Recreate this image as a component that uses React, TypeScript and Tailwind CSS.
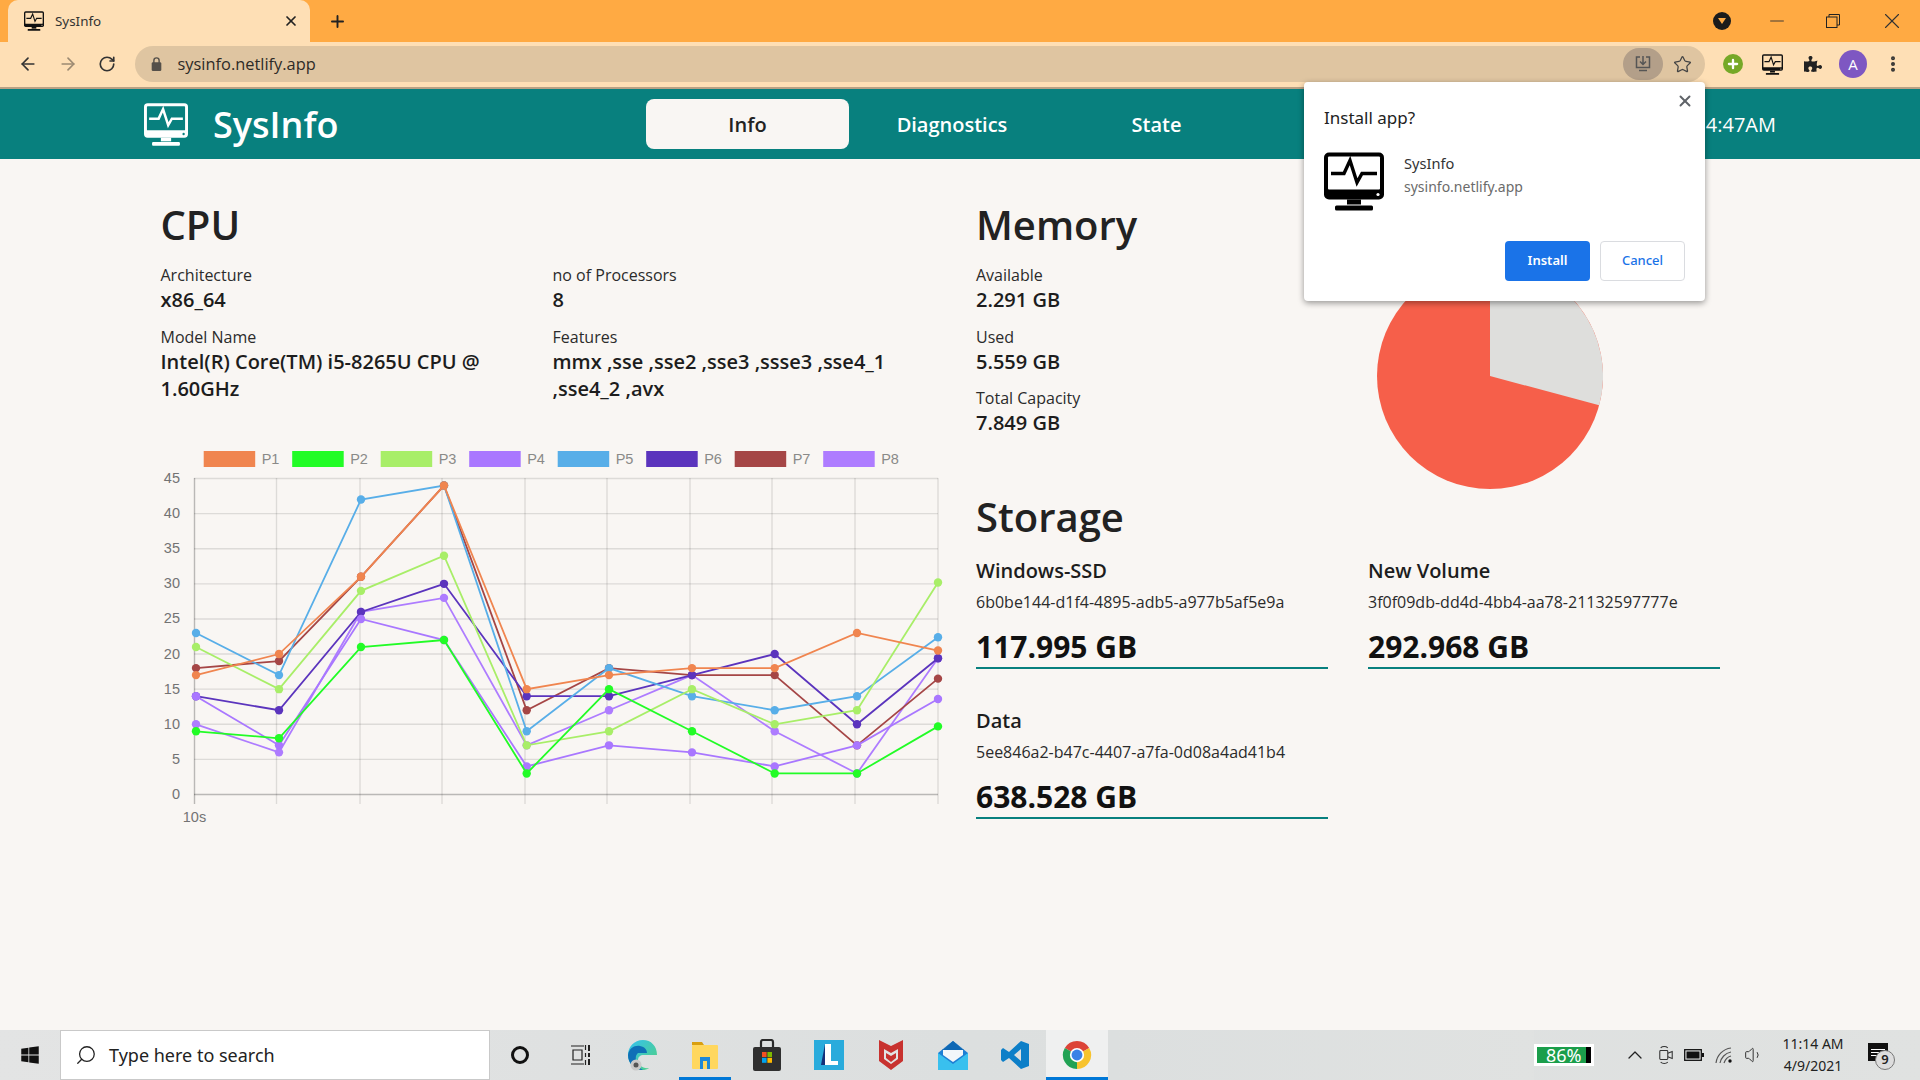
import React from "react";
import { ArrowLeft, ArrowRight, RotateCw, Star, X, Plus, Minus, EllipsisVertical, ChevronUp, Search, Volume1 } from "lucide-react";
import { FaPuzzlePiece, FaWindows } from "react-icons/fa";

const Monitor = ({ fg, bg, className }: { fg: string; bg: string; className: string }) => (
  <svg viewBox="0 0 60 58" className={className}>
    <rect x="0" y="0" width="60" height="47" rx="5" fill={fg} />
    <rect x="4" y="4" width="52" height="33" rx="1" fill={bg} />
    <polyline points="7,21 20,21 26,8 33,30 38,21 53,21" fill="none" stroke={fg} strokeWidth="3.4" />
    <circle cx="54" cy="42" r="1.6" fill={bg} />
    <rect x="23" y="47" width="14" height="5" fill={fg} />
    <rect x="11" y="53" width="38" height="5" rx="1.5" fill={fg} />
  </svg>
);

const xs = [196, 279, 361, 444, 526.7, 609, 692, 774.7, 857, 938];
const y = (v: number) => 794.5 - v * (316 / 45);
const series = [
  { n: "P1", c: "#f0854f", d: [17, 20, 31, 44, 15, 17, 18, 18, 23, 20.5] },
  { n: "P2", c: "#22fc26", d: [9, 8, 21, 22, 3, 15, 9, 3, 3, 9.7] },
  { n: "P3", c: "#a8ee68", d: [21, 15, 29, 34, 7, 9, 15, 10, 12, 30.2] },
  { n: "P4", c: "#a977ff", d: [14, 7, 25, 22, 4, 7, 6, 4, 7, 13.6] },
  { n: "P5", c: "#58aee8", d: [23, 17, 42, 44, 9, 18, 14, 12, 14, 22.4] },
  { n: "P6", c: "#5b34bd", d: [14, 12, 26, 30, 14, 14, 17, 20, 10, 19.4] },
  { n: "P7", c: "#a54646", d: [18, 19, 31, 44, 12, 18, 17, 17, 7, 16.5] },
  { n: "P8", c: "#ae7cff", d: [10, 6, 26, 28, 7, 12, 17, 9, 3, 19.4] },
];
const gridX = [194.5, 276.5, 360, 442, 525, 607, 690, 772, 855, 938];
const ticks = [0, 5, 10, 15, 20, 25, 30, 35, 40, 45];

const Chart = () => (
  <svg viewBox="160 440 790 390" className="-ml-[0.5px] mt-[37px] block h-[390px] w-[790px]" style={{ fontFamily: '"Liberation Sans", sans-serif' }}>
    {series.map((s, i) => {
      const bx = 203.7 + i * 88.5;
      return (
        <g key={s.n}>
          <rect x={bx} y="451" width="51.5" height="16" fill={s.c} />
          <text x={bx + 58} y="463.5" fontSize="14.5" fill="#8a8a88">{s.n}</text>
        </g>
      );
    })}
    {ticks.map((t) => (
      <g key={t}>
        <line x1="194" x2="938" y1={y(t)} y2={y(t)} stroke={t === 0 ? "#00000040" : "#0000001c"} strokeWidth="1.4" />
        <text x="180" y={y(t) + 4.5} textAnchor="end" fontSize="14.5" fill="#737373">{t}</text>
      </g>
    ))}
    {gridX.map((g, i) => (
      <line key={g} x1={g} x2={g} y1="478" y2="804" stroke={i === 0 ? "#00000040" : "#0000001c"} strokeWidth="1.4" />
    ))}
    <text x="194.5" y="822" textAnchor="middle" fontSize="14.5" fill="#737373">10s</text>
    {[...series].reverse().map((s) => (
      <g key={s.n}>
        <polyline points={s.d.map((v, i) => `${xs[i]},${y(v)}`).join(" ")} fill="none" stroke={s.c} strokeWidth="1.8" />
        {s.d.map((v, i) => (
          <circle key={i} cx={xs[i]} cy={y(v)} r="4.2" fill={s.c} />
        ))}
      </g>
    ))}
  </svg>
);

const Field = ({ label, children, className = "" }: { label: string; children: React.ReactNode; className?: string }) => (
  <div className={className}>
    <div className="text-[16px] leading-[24px] text-[#2b2b2b]">{label}</div>
    <div className="-mt-[1px] pb-[1px] text-[20px] font-semibold leading-[27px] text-[#1d1d1d]">{children}</div>
  </div>
);

const Disk = ({ name, id, size }: { name: string; id: string; size: string }) => (
  <div className="w-[352px]">
    <div className="text-[20px] font-semibold leading-[30px] text-[#1d1d1d]">{name}</div>
    <div className="mt-[4px] text-[16px] leading-[24px] text-[#2b2b2b]">{id}</div>
    <div className="mt-[15px] border-b-2 border-[#08807e] pb-[2px] text-[30px] font-bold leading-[36px] text-[#111]">{size}</div>
  </div>
);

const Slot = ({ children, active, line, full }: { children: React.ReactNode; active?: boolean; line?: boolean; full?: boolean }) => (
  <div className={`relative flex h-[50px] w-[62px] items-center justify-center ${active ? "bg-[#eff0f0]" : ""}`}>
    {children}
    {line && <div className={`absolute bottom-0 h-[3px] bg-[#0078d7] ${full ? "inset-x-0" : "inset-x-[5px]"}`} />}
  </div>
);

export default function App() {
  return (
    <div className="relative flex h-[1080px] w-[1920px] flex-col overflow-hidden bg-[#f9f6f3]" style={{ fontFamily: '"Open Sans", sans-serif' }}>
      {/* tab strip */}
      <div className="flex h-[42px] shrink-0 items-end bg-[#ffaa43] pl-[8px]">
        <div className="flex h-[42px] w-[302px] items-center rounded-t-[10px] bg-[#fedfb5] pl-[16px] pr-[11px]">
          <Monitor fg="#111" bg="#fedfb5" className="h-[20px] w-[20px]" />
          <span className="ml-[11px] text-[13.4px] text-[#333]" style={{ fontFamily: '"Noto Sans", sans-serif' }}>SysInfo</span>
          <X className="ml-auto h-[16px] w-[16px] text-[#222]" strokeWidth={2.6} />
        </div>
        <Plus className="mb-[11px] ml-[18px] h-[19px] w-[19px] text-[#222]" strokeWidth={2.4} />
        <div className="ml-auto flex h-[42px] items-center">
          <div className="flex h-[18px] w-[18px] items-center justify-center rounded-full bg-[#1b1b1b]">
            <div className="h-0 w-0 border-x-[4px] border-t-[6px] border-x-transparent border-t-[#ffaa43]" />
          </div>
          <Minus className="ml-[35px] h-[22px] w-[22px] text-[#333]" strokeWidth={1} />
          <svg viewBox="0 0 14 14" className="ml-[38px] h-[14px] w-[14px] text-[#222]" fill="none" stroke="currentColor" strokeWidth="1">
            <rect x="0.5" y="3" width="10.5" height="10.5" />
            <path d="M3 3V0.5H13.5V11H11" />
          </svg>
          <X className="ml-[39px] mr-[15px] h-[26px] w-[26px] text-[#333]" strokeWidth={1} />
        </div>
      </div>
      {/* toolbar */}
      <div className="flex h-[47px] shrink-0 items-center border-b-2 border-[#b9a184] bg-[#fedfb5] pb-[1px]">
        <ArrowLeft className="ml-[18px] h-[20px] w-[20px] text-[#333]" strokeWidth={2} />
        <ArrowRight className="ml-[20px] h-[20px] w-[20px] text-[#9c8a72]" strokeWidth={2} />
        <RotateCw className="ml-[20px] h-[18px] w-[18px] text-[#333]" strokeWidth={2.2} />
        <div className="ml-[19px] flex h-[36px] w-[1570px] items-center rounded-full bg-[#dfc5a1] pl-[16px] pr-[8px]">
          <svg viewBox="0 0 12 16" className="h-[14px] w-[11px]" fill="#55504a">
            <rect x="0.5" y="6" width="11" height="10" rx="1.5" />
            <path d="M3 7V4a3 3 0 0 1 6 0v3" fill="none" stroke="#55504a" strokeWidth="1.6" />
          </svg>
          <span className="ml-[15.5px] pt-[1px] text-[16.4px] text-[#2e2b27]">sysinfo.netlify.app</span>
          <div className="ml-auto flex h-[32px] w-[40px] items-center justify-center rounded-full bg-[#b39f89]">
            <svg viewBox="0 0 18 18" className="h-[18px] w-[18px]" fill="none" stroke="#555" strokeWidth="1.5">
              <path d="M6 2H2.5V12.5H15.5V2H12M9 1V9.5M6 6.5L9 9.5L12 6.5M5 15.5H13" />
            </svg>
          </div>
          <Star className="ml-[10px] mr-[5px] h-[19px] w-[19px] text-[#444]" strokeWidth={1.6} />
        </div>
        <div className="ml-[18px] flex h-[20px] w-[20px] items-center justify-center rounded-full bg-[#76a827]">
          <Plus className="h-[14px] w-[14px] text-white" strokeWidth={4} />
        </div>
        <Monitor fg="#111" bg="#fedfb5" className="ml-[19px] h-[21px] w-[21px]" />
        <FaPuzzlePiece className="ml-[21px] h-[18px] w-[18px] text-[#222]" />
        <div className="ml-[17px] flex h-[28px] w-[28px] items-center justify-center rounded-full bg-[#7e57c2] text-[15px] text-white">A</div>
        <EllipsisVertical className="ml-[16px] h-[20px] w-[20px] text-[#333]" strokeWidth={2.8} />
      </div>
      {/* app bar */}
      <div className="flex h-[70px] shrink-0 items-center bg-[#08807e] pl-[144px] pr-[144px] pt-[1px] text-white">
        <div className="flex w-[502px] items-center">
          <Monitor fg="#fff" bg="#08807e" className="h-[43px] w-[44px]" />
          <span className="ml-[25px] text-[36px] font-semibold leading-none">SysInfo</span>
        </div>
        <div className="-mt-[1px] flex h-[50px] w-[203px] items-center justify-center rounded-[8px] bg-[#f9f6f3] pt-[1px] text-[20px] font-semibold text-[#222]">Info</div>
        <div className="flex w-[206px] justify-center text-[20px] font-semibold">Diagnostics</div>
        <div className="flex w-[203px] justify-center text-[20px] font-semibold">State</div>
        <div className="ml-auto text-[20px]">4:47AM</div>
      </div>
      {/* content */}
      <div className="flex h-[871px] shrink-0 pl-[160.5px] pt-[39px]">
        <div className="w-[815.5px]">
          <h1 className="text-[40px] font-semibold leading-[54px] text-[#222]">CPU</h1>
          <div className="mt-[11px] grid w-[744px] grid-cols-[352px_352px] gap-x-[40px] gap-y-[11px]">
            <Field label="Architecture">x86_64</Field>
            <Field label="no of Processors">8</Field>
            <Field label="Model Name">Intel(R) Core(TM) i5-8265U CPU @ 1.60GHz</Field>
            <Field label="Features">mmx ,sse ,sse2 ,sse3 ,ssse3 ,sse4_1 ,sse4_2 ,avx</Field>
          </div>
          <Chart />
        </div>
        <div className="w-[744px]">
          <div className="flex h-[290px]">
            <div className="w-[401px]">
              <h1 className="text-[40px] font-semibold leading-[54px] text-[#222]">Memory</h1>
              <Field label="Available" className="mt-[11px]">2.291 GB</Field>
              <Field label="Used" className="mt-[11px]">5.559 GB</Field>
              <Field label="Total Capacity" className="mt-[10px]">7.849 GB</Field>
            </div>
            <svg viewBox="0 0 226 226" className="mt-[65px] h-[226px] w-[226px]">
              <circle cx="113" cy="113" r="113" fill="#f65f4a" />
              <path d="M113 113V0A113 113 0 0 1 222.2 142.2Z" fill="#dededc" />
            </svg>
          </div>
          <h1 className="mt-[2px] text-[40px] font-semibold leading-[54px] text-[#222]">Storage</h1>
          <div className="mt-[12px] grid grid-cols-[352px_352px] gap-x-[40px] gap-y-[37px]">
            <Disk name="Windows-SSD" id="6b0be144-d1f4-4895-adb5-a977b5af5e9a" size="117.995 GB" />
            <Disk name="New Volume" id="3f0f09db-dd4d-4bb4-aa78-21132597777e" size="292.968 GB" />
            <Disk name="Data" id="5ee846a2-b47c-4407-a7fa-0d08a4ad41b4" size="638.528 GB" />
          </div>
        </div>
      </div>
      {/* taskbar */}
      <div className="flex h-[50px] shrink-0 items-center bg-gradient-to-r from-[#e3e4e4] via-[#dcdfdf] to-[#e0e2e1]" style={{ fontFamily: '"Noto Sans", sans-serif' }}>
        <div className="flex h-[50px] w-[60px] items-center justify-center">
          <FaWindows className="h-[20px] w-[20px] text-[#111]" />
        </div>
        <div className="flex h-[50px] w-[430px] items-center border border-[#c9c9c9] bg-white pl-[14px]">
          <Search className="h-[22px] w-[22px] -scale-x-100 text-[#222]" strokeWidth={1.4} />
          <span className="ml-[12px] text-[18px] text-[#222]">Type here to search</span>
        </div>
        <div className="flex h-[50px] w-[60px] items-center justify-center">
          <div className="h-[18px] w-[18px] rounded-full border-[3px] border-[#111]" />
        </div>
        <Slot>
          <svg viewBox="0 0 22 22" className="h-[22px] w-[22px]" fill="none" stroke="#222" strokeWidth="1.2">
            <path d="M1 2H14M1 20H14M15.5 1V6M15.5 9V13M15.5 16V21M3 6H12V16H3Z" />
            <path d="M19 1V7M19 9V13M19 15V21" stroke="#222" strokeWidth="2" />
          </svg>
        </Slot>
        <Slot>
          <svg viewBox="0 0 32 32" className="h-[32px] w-[32px]">
            <defs>
              <linearGradient id="e1" x1="0" y1="0" x2="1" y2="1">
                <stop offset="0" stopColor="#35c1f1" />
                <stop offset="1" stopColor="#52d27b" />
              </linearGradient>
            </defs>
            <path d="M16 1C7 1 1 8 1 16c0 8 6 15 14 15 3 0 5-.6 7-2-6 1-11-3-11-8 0-3 2-5 6-5h13C30 7 24 1 16 1Z" fill="url(#e1)" />
            <path d="M1 16C2 9 8 6 13 7c5 1 7 4 7 7H11c-3 2-3 8 0 12 1 2 3 4 5 5C7 31 1 24 1 16Z" fill="#0f70b7" />
            <circle cx="9" cy="26" r="5.5" fill="#c9c9c9" />
            <circle cx="9" cy="26" r="2.5" fill="#555" />
          </svg>
        </Slot>
        <Slot line>
          <svg viewBox="0 0 28 30" className="h-[30px] w-[28px]">
            <path d="M1 2H11L13 5H1Z" fill="#d99f10" />
            <rect x="1" y="5" width="26" height="24" rx="1" fill="#ffd75e" />
            <path d="M9 29V17H19V29H16V21H12V29Z" fill="#1e88d8" />
          </svg>
        </Slot>
        <Slot>
          <svg viewBox="0 0 30 32" className="h-[32px] w-[30px]">
            <path d="M9 8V3a2 2 0 0 1 2-2h8a2 2 0 0 1 2 2v5" fill="none" stroke="#2a2a2a" strokeWidth="2.2" />
            <rect x="1" y="8" width="28" height="24" rx="2" fill="#2f2f2f" />
            <rect x="10" y="13" width="4.6" height="5" fill="#f25022" />
            <rect x="15.4" y="13" width="4.6" height="5" fill="#7fba00" />
            <rect x="10" y="18.8" width="4.6" height="5" fill="#00a4ef" />
            <rect x="15.4" y="18.8" width="4.6" height="5" fill="#ffb900" />
          </svg>
        </Slot>
        <Slot>
          <svg viewBox="0 0 30 30" className="h-[30px] w-[30px]">
            <rect width="30" height="30" fill="#29abdc" />
            <path d="M11 4H17V21H24V25H11Z" fill="#fff" />
            <path d="M11 4L7 25H11Z" fill="#14307a" />
          </svg>
        </Slot>
        <Slot>
          <svg viewBox="0 0 26 32" className="h-[32px] w-[26px]">
            <path d="M1 1L13 7L25 1V22L13 31L1 22Z" fill="#c8322f" />
            <path d="M6 10L13 14L20 10V20L13 25L6 20Z" fill="#e2e3e3" />
            <path d="M8 14L13 17L18 14V19L13 23L8 19Z" fill="#c8322f" />
          </svg>
        </Slot>
        <Slot>
          <svg viewBox="0 0 30 30" className="h-[30px] w-[30px]">
            <path d="M15 1L30 13V30H0V13Z" fill="#1d7fd4" />
            <path d="M0 13L15 24L30 13V30H0Z" fill="#39c0ee" />
            <path d="M5 15V9L15 2L25 9V15L15 22Z" fill="#f2f6fa" />
            <path d="M15 1L26 10H4Z" fill="#0f68b4" />
          </svg>
        </Slot>
        <Slot>
          <svg viewBox="0 0 30 30" className="h-[30px] w-[30px]">
            <path d="M21 1L29 4V26L21 29L9 18L3 22L1 20V10L3 8L9 12ZM21 9L14 15L21 21Z" fill="#0d7fc8" fillRule="evenodd" />
          </svg>
        </Slot>
        <Slot active line full>
          <svg viewBox="0 0 32 32" className="h-[30px] w-[30px]">
            <path d="M16 16L3 8.5A15 15 0 0 1 29 8.5Z" fill="#dc4437" />
            <path d="M16 16L29 8.5A15 15 0 0 1 16 31Z" fill="#f7c32e" />
            <path d="M16 16L16 31A15 15 0 0 1 3 8.5Z" fill="#21a254" />
            <circle cx="16" cy="16" r="7.6" fill="#fff" />
            <circle cx="16" cy="16" r="5.8" fill="#3b82e6" />
          </svg>
        </Slot>
        <div className="flex-1 self-stretch bg-gradient-to-r from-[#dcdfdf] to-[#e0e2e1]" />
        {/* tray */}
        <div className="mr-[29px] flex h-[22px] w-[60px] items-center justify-between border-[3px] border-white bg-[#1b9e4b] pl-[9px] text-[18px] text-white">
          <span className="leading-none">86%</span>
          <div className="h-full w-[5px] bg-black" />
        </div>
        <ChevronUp className="h-[24px] w-[24px] text-[#222]" strokeWidth={1.3} />
        <svg viewBox="0 0 18 22" className="ml-[11px] h-[20px] w-[16px]" fill="none" stroke="#333" strokeWidth="1.2">
          <rect x="2" y="6" width="9" height="10" rx="1" />
          <path d="M11 9L16 7V15L11 13M3 3C5 1 9 1 11 3M3 19C5 21 9 21 11 19" />
        </svg>
        <svg viewBox="0 0 20 12" className="ml-[10px] h-[12px] w-[20px]" fill="none" stroke="#111" strokeWidth="1.3">
          <rect x="0.7" y="0.7" width="16.6" height="10.6" />
          <rect x="2.5" y="2.5" width="13" height="7" fill="#111" stroke="none" />
          <rect x="18" y="4" width="2" height="4" fill="#111" stroke="none" />
        </svg>
        <svg viewBox="0 0 20 18" className="ml-[11px] h-[18px] w-[20px]" fill="none" stroke="#555" strokeWidth="1.2">
          <path d="M1 17C2 9 8 3 16 2M5 17C6 12 10 7 16 6M9 17C10 14 12 11 16 10" />
          <circle cx="15" cy="15" r="1.7" fill="#111" stroke="none" />
        </svg>
        <Volume1 className="ml-[9px] h-[20px] w-[20px] text-[#333]" strokeWidth={1.2} />
        <div className="ml-[14px] flex w-[70px] flex-col items-center text-[14px] leading-[22px] text-[#222]">
          <span>11:14 AM</span>
          <span>4/9/2021</span>
        </div>
        <div className="relative ml-[20px] mr-[26px] h-[24px] w-[26px]">
          <div className="flex h-[18px] w-[20px] flex-col justify-center gap-[2px] bg-[#111] px-[3px]">
            <div className="h-[1px] bg-white" />
            <div className="h-[1px] bg-white" />
            <div className="h-[1px] bg-white" />
          </div>
          <div className="absolute bottom-[-3px] right-[-1px] flex h-[20px] w-[20px] items-center justify-center rounded-full border border-[#777] bg-[#dddddd] text-[13px] font-semibold text-[#222]">9</div>
        </div>
      </div>
      {/* install dialog */}
      <div className="absolute left-[1304px] top-[82px] h-[219px] w-[401px] rounded-[4px] bg-white shadow-[0_2px_6px_rgba(0,0,0,0.4)]" style={{ fontFamily: '"Noto Sans", sans-serif' }}>
        <X className="absolute right-[11px] top-[10px] h-[18px] w-[18px] text-[#5f6368]" strokeWidth={2.6} />
        <div className="pl-[20px] pt-[23px] text-[17px] leading-[26px] text-[#222]">Install app?</div>
        <div className="mt-[21px] flex pl-[20px]">
          <Monitor fg="#000" bg="#fff" className="h-[59px] w-[60px]" />
          <div className="ml-[20px]">
            <div className="text-[14.6px] leading-[22px] text-[#333]">SysInfo</div>
            <div className="mt-[2px] text-[14px] leading-[22px] text-[#6b6b6b]">sysinfo.netlify.app</div>
          </div>
        </div>
        <div className="absolute bottom-[20px] right-[20px] flex gap-[10px] text-[13px] font-semibold">
          <div className="flex h-[40px] w-[85px] items-center justify-center rounded-[4px] bg-[#1a73e8] text-white">Install</div>
          <div className="flex h-[40px] w-[85px] items-center justify-center rounded-[4px] border border-[#dadce0] bg-white font-medium text-[#1a73e8]">Cancel</div>
        </div>
      </div>
    </div>
  );
}
